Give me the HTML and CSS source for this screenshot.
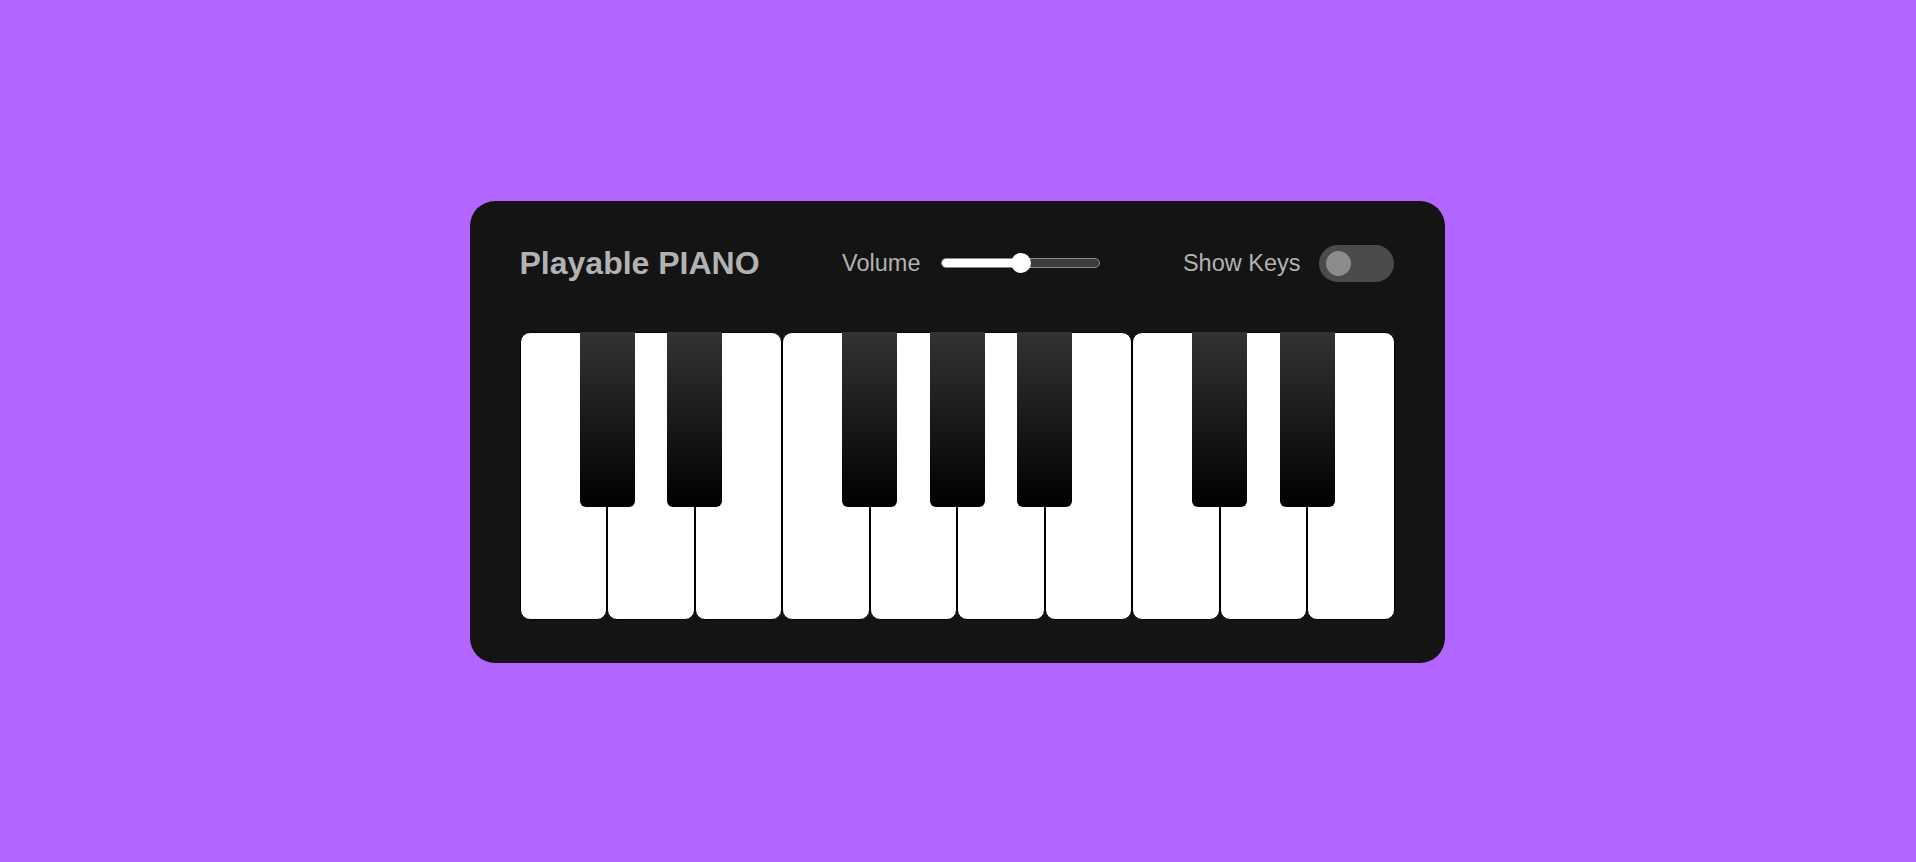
FILE: index.html
```html
<!DOCTYPE html>
<html lang="en">
<head>
<meta charset="utf-8">
<title>Playable Piano</title>
<link rel="stylesheet" href="styles.css">
</head>
<body>
<div class="wrapper">
  <header class="header">
    <h2 class="title">Playable PIANO</h2>
    <div class="column volume">
      <span class="label">Volume</span>
      <input class="slider" type="range" min="0" max="1" value="0.5" step="any">
    </div>
    <div class="column keys-toggle">
      <span class="label">Show Keys</span>
      <span class="switch"><span class="knob"></span></span>
    </div>
  </header>
  <ul class="piano-keys">
    <li class="key white"></li>
    <li class="key black"></li>
    <li class="key white"></li>
    <li class="key black"></li>
    <li class="key white"></li>
    <li class="key white"></li>
    <li class="key black"></li>
    <li class="key white"></li>
    <li class="key black"></li>
    <li class="key white"></li>
    <li class="key black"></li>
    <li class="key white"></li>
    <li class="key white"></li>
    <li class="key black"></li>
    <li class="key white"></li>
    <li class="key black"></li>
    <li class="key white"></li>
  </ul>
</div>
</body>
</html>
```
FILE: styles.css
```css
* {
  margin: 0;
  padding: 0;
  box-sizing: border-box;
}
body {
  display: flex;
  align-items: center;
  justify-content: center;
  min-height: 100vh;
  padding-top: 2px;
  padding-right: 2px;
  background: #b266ff;
  font-family: "Liberation Sans", Arial, sans-serif;
}
.wrapper {
  width: 975px;
  padding: 43.75px 50px;
  border-radius: 25px;
  background: #141414;
}
.header {
  display: flex;
  align-items: center;
  justify-content: space-between;
  height: 37.5px;
  color: #b2b2b2;
}
.title {
  font-size: 32px;
  font-weight: bold;
  line-height: 1;
}
.column {
  display: flex;
  align-items: center;
}
.label {
  font-size: 23.5px;
  margin-right: 19px;
}
.volume .label {
  margin-right: 21px;
}
.slider {
  -webkit-appearance: none;
  appearance: none;
  width: 159px;
  height: 20px;
  background: transparent;
  outline: none;
}
.slider::-webkit-slider-runnable-track {
  height: 10px;
  border-radius: 5px;
  border: 1px solid #8a8a8a;
  background: linear-gradient(to right, #fff 50%, #3b3b3b 50%);
}
.slider::-webkit-slider-thumb {
  -webkit-appearance: none;
  appearance: none;
  width: 20px;
  height: 20px;
  margin-top: -6px;
  border-radius: 50%;
  background: #fff;
}
.switch {
  display: flex;
  align-items: center;
  width: 75px;
  height: 37.5px;
  border-radius: 19px;
  background: #4b4b4b;
  padding-left: 6.5px;
}
.knob {
  width: 25px;
  height: 25px;
  border-radius: 50%;
  background: #8c8c8c;
}
.piano-keys {
  display: flex;
  list-style: none;
  margin-top: 50px;
}
.key {
  position: relative;
}
.key.white {
  width: 87.5px;
  height: 287.5px;
  border: 1px solid #000;
  border-radius: 10px;
  background: #fff;
}
.key.black {
  z-index: 2;
  width: 55px;
  height: 175px;
  margin: 0 -27.5px;
  border-radius: 0 0 6px 6px;
  background: linear-gradient(#333, #000);
}
```
